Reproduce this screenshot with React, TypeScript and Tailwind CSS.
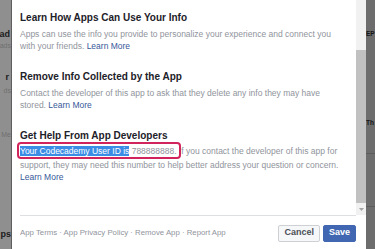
import React from "react";

export default function App() {
  const body = "text-[8.5px] leading-[12px] text-[#90949c] whitespace-nowrap";
  const head = "text-[10px] leading-[12px] font-bold text-[#1d2129] whitespace-nowrap";
  const link = "text-[#365899]";
  return (
    <div className="w-[375px] h-[249px] flex overflow-hidden font-['Liberation_Sans',Arial,sans-serif] bg-white">
      {/* left background strip */}
      <div className="w-[12px] h-full bg-[#8f8f8f] border-r border-[#5e5e5e] flex flex-col items-end overflow-hidden">
        <div className="mt-[28px] text-[9px] leading-[12px] font-bold text-[#1b1b1b] pr-[1px]">ad</div>
        <div className="text-[7px] leading-[11px] text-[#707070]">ads</div>
        <div className="mt-[20px] text-[9px] leading-[12px] font-bold text-[#1b1b1b] pr-[2px]">r</div>
        <div className="mt-[2px] text-[7px] leading-[11px] text-[#707070]">ds</div>
        <div className="mt-[33px] text-[7px] leading-[11px] text-[#707070]">Me</div>
        <div className="mt-[88px] text-[9px] leading-[12px] font-bold text-[#1b1b1b]">ps</div>
      </div>

      {/* modal */}
      <div className="w-[354px] h-full flex flex-col bg-white">
        <div className="h-[215px] flex">
          <div className="flex-1 pl-[8px] pt-[12px] relative">
            <div className={head}>Learn How Apps Can Use Your Info</div>
            <div className={`${body} mt-[4px]`}>
              Apps can use the info you provide to personalize your experience and connect you
            </div>
            <div className={body}>
              with your friends. <span className={link}>Learn More</span>
            </div>

            <div className={`${head} mt-[19px]`}>Remove Info Collected by the App</div>
            <div className={`${body} mt-[4px]`}>
              Contact the developer of this app to ask that they delete any info they may have
            </div>
            <div className={body}>
              stored. <span className={link}>Learn More</span>
            </div>

            <div className={`${head} mt-[19px]`}>Get Help From App Developers</div>
            <div className={`${body} mt-[3px] relative`}>
              <span className="bg-[#3b8ce4] text-white">Your Codecademy User ID is</span> 788888888. If you contact the developer of this app for
              <div className="absolute left-[-3px] top-[-3px] w-[164px] h-[17px] border-2 border-[#d2245c] rounded-[4px]" />
            </div>
            <div className={`${body} mt-[2px]`}>
              support, they may need this number to help better address your question or concern.
            </div>
            <div className={body}>
              <span className={link}>Learn More</span>
            </div>
          </div>
          {/* scrollbar */}
          <div className="w-[10px] h-full flex flex-col bg-[#f1f1f1]">
            <div className="h-[50px]" />
            <div className="flex-1 bg-[#c1c1c1]" />
            <div className="h-[12px] flex items-center justify-center">
              <svg width="5" height="3" viewBox="0 0 5 3">
                <path d="M0 0 L5 0 L2.5 3 Z" fill="#a3a3a3" />
              </svg>
            </div>
          </div>
        </div>
        <div className="flex-1 ml-[8px] mr-[10px] border-t border-[#dddfe2] flex items-center justify-between">
          <div className="text-[7.8px] leading-[12px] text-[#90949c] whitespace-nowrap mt-[1px]">
            App Terms · App Privacy Policy · Remove App · Report App
          </div>
          <div className="flex gap-[3px] mt-[1px]">
            <div className="h-[17px] px-[5px] flex items-center bg-[#f6f7f9] border border-[#ced0d4] rounded-[2px] text-[9px] font-bold text-[#4b4f56]">
              Cancel
            </div>
            <div className="h-[17px] px-[5px] flex items-center bg-[#4267b2] border border-[#4267b2] rounded-[2px] text-[9px] font-bold text-white">
              Save
            </div>
          </div>
        </div>
      </div>

      {/* right background strip */}
      <div className="w-[9px] h-full bg-[#6d6d6d] flex flex-col overflow-hidden">
        <div className="mt-[29px] text-[6.5px] leading-[9px] font-bold text-[#151515] whitespace-nowrap">EP</div>
        <div className="mt-[80px] text-[6.5px] leading-[9px] font-bold text-[#151515] whitespace-nowrap">Th</div>
        <div className="mt-[26px] h-px bg-[#5c5c5c]" />
        <div className="mt-[52px] h-px bg-[#5c5c5c]" />
      </div>
    </div>
  );
}
